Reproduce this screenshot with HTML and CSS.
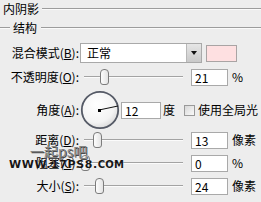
FILE: index.html
```html
<!DOCTYPE html>
<html>
<head>
<meta charset="utf-8">
<link rel="stylesheet" href="styles.css">
</head>
<body>
<div class="panel">
  <div class="title"><span class="title-text">内阴影</span><span class="rule"></span></div>
  <div class="group"><span class="rule short"></span><span class="group-text">结构</span><span class="rule"></span></div>

  <div class="row r1">
    <div class="label">混合模式(<u>B</u>):</div>
    <div class="select"><span class="select-text">正常</span><span class="select-btn"><span class="tri"></span></span></div>
    <div class="swatch"></div>
  </div>

  <div class="row r2">
    <div class="label">不透明度(<u>O</u>):</div>
    <div class="slider"><span class="track"></span><span class="thumb" style="left:19px"></span></div>
    <div class="num">21</div>
    <div class="unit">%</div>
  </div>

  <div class="row r3">
    <div class="label">角度(<u>A</u>):</div>
    <div class="dial">
      <svg width="40" height="40" viewBox="0 0 40 40">
        <defs>
          <radialGradient id="g" cx="40%" cy="35%" r="70%">
            <stop offset="0" stop-color="#ffffff"/>
            <stop offset="0.7" stop-color="#f3f3f3"/>
            <stop offset="1" stop-color="#d8d8d8"/>
          </radialGradient>
        </defs>
        <circle cx="20" cy="20" r="18.2" fill="url(#g)" stroke="#555a66" stroke-width="1.8"/>
        <line x1="19" y1="20" x2="38" y2="16" stroke="#111" stroke-width="1"/>
        <rect x="18" y="19" width="3" height="3" fill="#000"/>
      </svg>
    </div>
    <div class="num wide">12</div>
    <div class="unit deg">度</div>
    <div class="check"></div>
    <div class="check-label">使用全局光</div>
  </div>

  <div class="row r4">
    <div class="label">距离(<u>D</u>):</div>
    <div class="slider"><span class="track"></span><span class="thumb" style="left:12px"></span></div>
    <div class="num">13</div>
    <div class="unit">像素</div>
  </div>

  <div class="row r5">
    <div class="label">阻塞(<u>C</u>):</div>
    <div class="slider"><span class="track"></span><span class="thumb" style="left:0px"></span></div>
    <div class="num">0</div>
    <div class="unit">%</div>
  </div>

  <div class="row r6">
    <div class="label">大小(<u>S</u>):</div>
    <div class="slider"><span class="track"></span><span class="thumb" style="left:14px"></span></div>
    <div class="num">24</div>
    <div class="unit">像素</div>
  </div>

  <div class="wm-cn">一起ps吧</div>
  <div class="wm-url">WWW.17PS8.<span class="wm-com">COM</span></div>
</div>
</body>
</html>
```
FILE: styles.css
```css
html, body {
  margin: 0;
  padding: 0;
  background: #ededed;
}
body {
  width: 261px;
  height: 202px;
  overflow: hidden;
  font-family: "Noto Sans CJK SC", "Noto Sans", sans-serif;
  font-size: 12px;
  color: #000;
}
.panel {
  position: relative;
  width: 261px;
  height: 202px;
  padding-top: 2px;
  box-sizing: border-box;
}
u { text-decoration: underline; text-underline-offset: 1px; }

.title, .group {
  display: flex;
  align-items: center;
  height: 14px;
  line-height: 14px;
}
.title { padding-left: 3px; }
.title-text { margin-right: 3px; }
.group { margin-top: 5px; }
.group-text { margin: 0 4px 0 3px; }
.rule {
  flex: 1;
  height: 1px;
  background: #9c9c9c;
  border-bottom: 1px solid #fafafa;
}
.rule.short { flex: 0 0 10px; }

.row {
  display: flex;
  align-items: center;
  height: 18px;
}
.r1 { margin-top: 8px; height: 20px; }
.r2 { margin-top: 5px; }
.r3 { margin-top: 4px; height: 40px; }
.r4 { margin-top: 1px; }
.r5 { margin-top: 5px; }
.r6 { margin-top: 5px; }

.label {
  width: 79px;
  text-align: right;
  white-space: nowrap;
  line-height: 14px;
  flex: none;
}

.select {
  margin-left: 1px;
  width: 120px;
  height: 18px;
  border: 1px solid #a9a9a9;
  background: #fff;
  display: flex;
  align-items: center;
  flex: none;
}
.select-text { flex: 1; padding-left: 6px; line-height: 14px; }
.select-btn {
  width: 14px;
  height: 18px;
  border-left: 1px solid #b8b8b8;
  background: linear-gradient(#e6e6e6, #c9c9c9);
  display: flex;
  align-items: center;
  justify-content: center;
}
.tri {
  width: 0; height: 0;
  border-left: 3px solid transparent;
  border-right: 3px solid transparent;
  border-top: 4px solid #111;
}
.swatch {
  margin-left: 4px;
  width: 29px;
  height: 15px;
  border: 1px solid #a9a4a4;
  background: #fee0e1;
  flex: none;
}

.slider {
  position: relative;
  margin-left: 2px;
  width: 102px;
  height: 18px;
  flex: none;
}
.track {
  position: absolute;
  left: 3px;
  right: 0;
  top: 8px;
  height: 1px;
  background: #a3a3a3;
  border-bottom: 1px solid #fbfbfb;
}
.thumb {
  position: absolute;
  top: 1px;
  width: 7px;
  height: 14px;
  border: 1px solid #7c7c7c;
  border-radius: 4px 4px 3px 3px;
  background: linear-gradient(90deg, #fdfdfd, #e4e4e4);
}

.num {
  margin-left: 8px;
  width: 37px;
  height: 17px;
  border: 1px solid #a9a9a9;
  background: #fff;
  padding-left: 3px;
  box-sizing: border-box;
  line-height: 15px;
  flex: none;
}
.num.wide { margin-left: 1px; width: 40px; }
.unit { margin-left: 4px; white-space: nowrap; line-height: 14px; }
.unit.deg { margin-left: 2px; }

.dial {
  margin-left: 1px;
  width: 40px;
  height: 40px;
  flex: none;
}
.dial svg { display: block; }

.check {
  margin-left: 9px;
  width: 9px;
  height: 9px;
  border: 1px solid #9a9a9a;
  background: linear-gradient(135deg, #d8d8d8, #fafafa);
  flex: none;
}
.check-label { margin-left: 3px; white-space: nowrap; line-height: 14px; }

.wm-cn {
  position: absolute;
  z-index: 2;
  left: 30px;
  top: 143px;
  font-family: "Noto Sans CJK SC", sans-serif;
  font-size: 14px;
  line-height: 16px;
  height: 16px;
  color: #858585;
  text-shadow: 1px 1px 0 #4a4a4a;
}
.wm-url {
  position: absolute;
  z-index: 3;
  left: 9px;
  top: 159px;
  font-family: "DejaVu Sans", sans-serif;
  font-weight: bold;
  font-size: 11px;
  line-height: 11px;
  color: #161616;
  letter-spacing: 0.6px;
  text-shadow: 0 0 1px #fff;
}
.wm-com { font-size: 10px; letter-spacing: 0.2px; }
```
